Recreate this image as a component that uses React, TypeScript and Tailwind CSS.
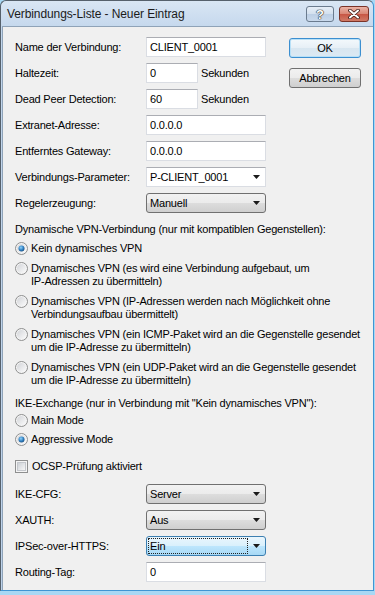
import React from "react"

const font = "font-['Liberation_Sans',Arial,sans-serif]"

const Arrow = () => (
    <svg width="7" height="4" viewBox="0 0 7 4" className="shrink-0">
        <polygon points="0,0 7,0 3.5,4" fill="#1a1a1a" />
    </svg>
)

const TextBox = ({ value, w = "w-[120px]" }: { value: string; w?: string }) => (
    <div className={`${w} h-[20px] bg-white border border-[#dadde3] border-t-[#abadb3] flex items-center pl-[3px] text-black`}>
        {value}
    </div>
)

const EditCombo = ({ value }: { value: string }) => (
    <div className="w-[120px] h-[20px] bg-white border border-[#dadde3] border-t-[#abadb3] flex items-center pl-[3px] pr-[5px] justify-between text-black">
        <span>{value}</span>
        <Arrow />
    </div>
)

const Combo = ({ value, focused = false }: { value: string; focused?: boolean }) => (
    <div
        className={`w-[120px] h-[20px] rounded-[3px] border flex items-center justify-between pr-[5px] text-black ${
            focused
                ? "border-[#3c7fb1] bg-[linear-gradient(#eaf6fd_0%,#d9f0fc_50%,#bee6fd_50%,#a7d9f5_100%)] pl-[1px]"
                : "border-[#707070] bg-[linear-gradient(#f2f2f2_0%,#ebebeb_50%,#dddddd_50%,#cfcfcf_100%)] pl-[3px]"
        }`}
    >
        {focused ? (
            <span className="w-[100px] h-[16px] border border-dotted border-[#222] flex items-center pl-[1px]">{value}</span>
        ) : (
            <span>{value}</span>
        )}
        <Arrow />
    </div>
)

const Row = ({ label, children }: { label: string; children: React.ReactNode }) => (
    <div className="flex items-center h-[20px]">
        <div className="w-[131px] shrink-0">{label}</div>
        {children}
    </div>
)

const Radio = ({ checked = false }: { checked?: boolean }) => (
    <svg width="13" height="13" viewBox="0 0 13 13" className="shrink-0 mt-0">
        <defs>
            <linearGradient id="rbFill" x1="0" y1="0" x2="1" y2="1">
                <stop offset="0" stopColor="#d2d4d8" />
                <stop offset="1" stopColor="#fbfbfb" />
            </linearGradient>
            <radialGradient id="rbDot" cx="0.4" cy="0.35" r="0.7">
                <stop offset="0" stopColor="#8fd3fb" />
                <stop offset="0.6" stopColor="#2f7ec0" />
                <stop offset="1" stopColor="#1b4f7e" />
            </radialGradient>
        </defs>
        <circle cx="6.5" cy="6.5" r="6" fill="#f4f4f4" stroke="#8e8f8f" />
        <circle cx="6.5" cy="6.5" r="4.5" fill="url(#rbFill)" />
        {checked && <circle cx="6.5" cy="6.5" r="3" fill="url(#rbDot)" />}
    </svg>
)

const RadioItem = ({ checked = false, children }: { checked?: boolean; children: React.ReactNode }) => (
    <div className="flex items-start">
        <Radio checked={checked} />
        <div className="ml-[3px] whitespace-nowrap">{children}</div>
    </div>
)

export default function App() {
    return (
        <div className={`w-[375px] h-[595px] bg-[#a8d8f4] ${font} text-[11px] leading-[13px] tracking-[-0.2px] text-black`}>
            <div className="w-[374px] h-[591px] flex flex-col rounded-t-[6px] border-l border-t border-[#56616c] border-r border-r-[#3f95d3] border-b border-b-[#3f95d3] bg-[linear-gradient(#d9e6f4,#c2d6ec_30px,#bdd2ea)] overflow-hidden">
                {/* Title bar */}
                <div className="h-[25px] shrink-0 flex items-center pl-[6px] pr-[4px]">
                    <div className="text-[12px] tracking-[-0.1px] text-[#1b1b1b] flex-1 pt-[1px]">Verbindungs-Liste - Neuer Eintrag</div>
                    <div className="flex items-center gap-[5px] self-start mt-[5px]">
                        <div className="w-[28px] h-[16px] rounded-[3px] border border-[#6a7b8e] bg-[linear-gradient(#e6eef7_0%,#d3e0ee_50%,#bccfe5_50%,#c9d9ec_100%)] flex items-center justify-center">
                            <span className="text-[13px] font-bold text-white leading-none tracking-normal [text-shadow:0_0_1px_#222,0_0_1px_#222,0_0_1px_#222]">?</span>
                        </div>
                        <div className="w-[30px] h-[16px] rounded-[3px] border border-[#7a3328] bg-[linear-gradient(#eab3a6_0%,#d98674_50%,#c75543_50%,#d07a66_100%)] flex items-center justify-center">
                            <svg width="12" height="10" viewBox="0 0 12 10">
                                <path d="M2 1.5 L10 8.5 M10 1.5 L2 8.5" stroke="#3a1a16" strokeWidth="3.6" strokeLinecap="round" />
                                <path d="M2 1.5 L10 8.5 M10 1.5 L2 8.5" stroke="#ffffff" strokeWidth="2" strokeLinecap="round" />
                            </svg>
                        </div>
                    </div>
                </div>

                {/* Client area */}
                <div className="flex-1 ml-[1px] bg-[#f0f0f0] border-l border-t border-[#8fa3b8] pl-[12px] pt-[10px]">
                    <div className="flex">
                        <div className="flex flex-col gap-[6px]">
                            <Row label="Name der Verbindung:">
                                <TextBox value="CLIENT_0001" />
                            </Row>
                            <Row label="Haltezeit:">
                                <TextBox value="0" w="w-[52px]" />
                                <span className="ml-[3px]">Sekunden</span>
                            </Row>
                            <Row label="Dead Peer Detection:">
                                <TextBox value="60" w="w-[52px]" />
                                <span className="ml-[3px]">Sekunden</span>
                            </Row>
                            <Row label="Extranet-Adresse:">
                                <TextBox value="0.0.0.0" />
                            </Row>
                            <Row label="Entferntes Gateway:">
                                <TextBox value="0.0.0.0" />
                            </Row>
                            <Row label="Verbindungs-Parameter:">
                                <EditCombo value="P-CLIENT_0001" />
                            </Row>
                            <Row label="Regelerzeugung:">
                                <Combo value="Manuell" />
                            </Row>
                        </div>
                        <div className="ml-[23px] mt-[1px] flex flex-col gap-[10px]">
                            <div className="w-[72px] h-[20px] rounded-[3px] border border-[#3c8fd0] bg-[linear-gradient(#f4f9fc_0%,#e6eff6_50%,#d8e6f0_50%,#dce9f3_100%)] flex items-center justify-center shadow-[inset_0_0_0_1px_#b8e0f7]">
                                OK
                            </div>
                            <div className="w-[72px] h-[20px] rounded-[3px] border border-[#707070] bg-[linear-gradient(#f2f2f2_0%,#ebebeb_50%,#dddddd_50%,#cfcfcf_100%)] flex items-center justify-center">
                                Abbrechen
                            </div>
                        </div>
                    </div>

                    <div className="mt-[10px]">Dynamische VPN-Verbindung (nur mit kompatiblen Gegenstellen):</div>
                    <div className="mt-[6px] flex flex-col gap-[7px]">
                        <RadioItem checked>Kein dynamisches VPN</RadioItem>
                        <RadioItem>
                            Dynamisches VPN (es wird eine Verbindung aufgebaut, um
                            <br />
                            IP-Adressen zu übermitteln)
                        </RadioItem>
                        <RadioItem>
                            Dynamisches VPN (IP-Adressen werden nach Möglichkeit ohne
                            <br />
                            Verbindungsaufbau übermittelt)
                        </RadioItem>
                        <RadioItem>
                            Dynamisches VPN (ein ICMP-Paket wird an die Gegenstelle gesendet
                            <br />
                            um die IP-Adresse zu übermitteln)
                        </RadioItem>
                        <RadioItem>
                            Dynamisches VPN (ein UDP-Paket wird an die Gegenstelle gesendet
                            <br />
                            um die IP-Adresse zu übermitteln)
                        </RadioItem>
                    </div>

                    <div className="mt-[10px]">IKE-Exchange (nur in Verbindung mit &quot;Kein dynamisches VPN&quot;):</div>
                    <div className="mt-[4px] flex flex-col gap-[6px]">
                        <RadioItem>Main Mode</RadioItem>
                        <RadioItem checked>Aggressive Mode</RadioItem>
                    </div>

                    <div className="mt-[14px] flex items-center">
                        <div className="w-[13px] h-[13px] border border-[#8e8f8f] bg-[#f4f4f4] flex items-center justify-center shrink-0">
                            <div className="w-[9px] h-[9px] bg-[linear-gradient(135deg,#cdd1d6,#f7f7f7)] border border-[#c4c7cc]" />
                        </div>
                        <span className="ml-[4px]">OCSP-Prüfung aktiviert</span>
                    </div>

                    <div className="mt-[11px] flex flex-col gap-[6px]">
                        <Row label="IKE-CFG:">
                            <Combo value="Server" />
                        </Row>
                        <Row label="XAUTH:">
                            <Combo value="Aus" />
                        </Row>
                        <Row label="IPSec-over-HTTPS:">
                            <Combo value="Ein" focused />
                        </Row>
                        <Row label="Routing-Tag:">
                            <TextBox value="0" />
                        </Row>
                    </div>
                </div>
            </div>
        </div>
    )
}
